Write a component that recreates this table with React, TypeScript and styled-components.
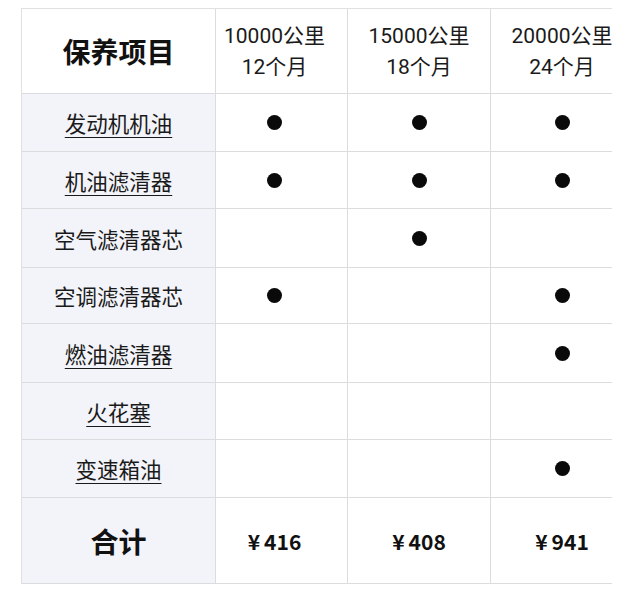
import React from "react";
import styled, { createGlobalStyle } from "styled-components";

const GlobalStyle = createGlobalStyle`
  html, body {
    margin: 0;
    padding: 0;
    background: #ffffff;
  }
  body {
    font-family: Roboto, "Noto Sans CJK SC", sans-serif;
    color: #111;
  }
`;

const Page = styled.div`
  width: 640px;
  height: 596px;
  padding: 8px 0 0 21px;
  box-sizing: border-box;
  background: #fff;
`;

// the photo cuts the last column, so the frame clips it
const Frame = styled.div`
  width: 591px;
  overflow: hidden;
`;

const Grid = styled.div`
  display: grid;
  grid-template-columns: 194px 132px 143px 143px;
  grid-template-rows: 85px 58px 57px 59px 56px 59px 57px 58px 86px;
  width: 612px;
  border-top: 1px solid #e0e0e3;
  border-left: 1px solid #e0e0e3;
`;

const Cell = styled.div<{ $side?: boolean; $shift?: number }>`
  display: flex;
  align-items: center;
  justify-content: center;
  box-sizing: border-box;
  border-right: 1px solid #dcdcdf;
  border-bottom: 1px solid #dcdcdf;
  background: ${(p) => (p.$side ? "#f3f4f9" : "#ffffff")};
  padding-right: ${(p) => p.$shift ?? 0}px;
  text-align: center;
`;

const HeadCell = styled(Cell)`
  background: #ffffff;
`;

const BigTitle = styled.div`
  font-family: "Noto Sans CJK SC", sans-serif;
  font-size: 28px;
  font-weight: 700;
  color: #111;
`;

const Period = styled.div`
  font-family: Roboto, "Noto Sans CJK SC", sans-serif;
  font-size: 21px;
  line-height: 31px;
  color: #1a1a1a;
  margin-top: 2px;
`;

const ItemName = styled.span<{ $link?: boolean }>`
  font-family: "Noto Sans CJK SC", sans-serif;
  font-size: 21.5px;
  color: #1a1a1a;
  text-decoration: ${(p) => (p.$link ? "underline" : "none")};
  text-decoration-thickness: 1px;
  text-underline-offset: 5px;
`;

const Dot = styled.span`
  display: block;
  width: 15px;
  height: 15px;
  border-radius: 50%;
  background: #0a0a0a;
`;

const Price = styled.span`
  font-family: "Noto Sans CJK SC", sans-serif;
  font-size: 21px;
  font-weight: 700;
  color: #111;
`;

const Yen = styled.span`
  margin-right: 4px;
`;

const periods = [
  ["10000公里", "12个月"],
  ["15000公里", "18个月"],
  ["20000公里", "24个月"],
];

const items: { name: string; link: boolean; marks: boolean[] }[] = [
  { name: "发动机机油", link: true, marks: [true, true, true] },
  { name: "机油滤清器", link: true, marks: [true, true, true] },
  { name: "空气滤清器芯", link: false, marks: [false, true, false] },
  { name: "空调滤清器芯", link: false, marks: [true, false, true] },
  { name: "燃油滤清器", link: true, marks: [false, false, true] },
  { name: "火花塞", link: true, marks: [false, false, false] },
  { name: "变速箱油", link: true, marks: [false, false, true] },
];

const totals = ["416", "408", "941"];

// column 2 content sits a little left of the middle in the photo
const shifts = [14, 0, 0];

export default function App() {
  return (
    <Page>
      <GlobalStyle />
      <Frame>
        <Grid>
          <HeadCell>
            <BigTitle>保养项目</BigTitle>
          </HeadCell>
          {periods.map((p, i) => (
            <HeadCell key={p[0]} $shift={shifts[i]}>
              <Period>
                {p[0]}
                <br />
                {p[1]}
              </Period>
            </HeadCell>
          ))}

          {items.map((it) => (
            <React.Fragment key={it.name}>
              <Cell $side>
                <ItemName $link={it.link}>{it.name}</ItemName>
              </Cell>
              {it.marks.map((m, i) => (
                <Cell key={i} $shift={shifts[i]}>
                  {m && <Dot />}
                </Cell>
              ))}
            </React.Fragment>
          ))}

          <Cell $side>
            <BigTitle>合计</BigTitle>
          </Cell>
          {totals.map((t, i) => (
            <Cell key={t} $shift={shifts[i]}>
              <Price>
                <Yen>¥</Yen>
                {t}
              </Price>
            </Cell>
          ))}
        </Grid>
      </Frame>
    </Page>
  );
}
